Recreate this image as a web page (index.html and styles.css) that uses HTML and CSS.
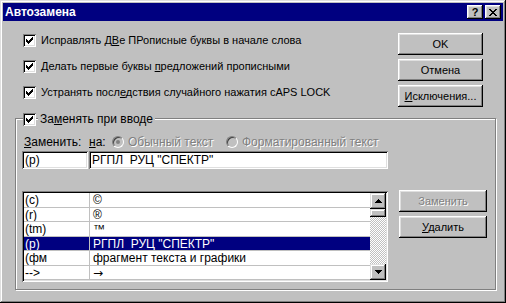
FILE: index.html
```html
<!DOCTYPE html>
<html>
  <head>
    <meta charset="utf-8" />
    <link rel="stylesheet" href="styles.css">
  </head>
  <body>
    <div class="window">
      <div class="titlebar">
        <span class="title">Автозамена</span>
        <div class="title-buttons">
          <span class="tbtn">?</span>
          <span class="tbtn">
            <svg width="8" height="7" viewBox="0 0 8 7" shape-rendering="crispEdges">
              <path d="M0 0h2v1h1v1h2v-1h1v-1h2v1h-1v1h-1v1h-1v1h1v1h1v1h1v1h-2v-1h-1v-1h-2v1h-1v1h-2v-1h1v-1h1v-1h1v-1h-1v-1h-1v-1h-1z" fill="#000"/>
            </svg>
          </span>
        </div>
      </div>

      <div class="top">
        <div class="options">
          <div class="check">
            <span class="box checked"></span>
            <span>Исправлять Д<u>В</u>е ПРописные буквы в начале слова</span>
          </div>
          <div class="check">
            <span class="box checked"></span>
            <span>Делать первые буквы <u>п</u>редложений прописными</span>
          </div>
          <div class="check">
            <span class="box checked"></span>
            <span>Устранять посл<u>е</u>дствия случайного нажатия cAPS LOCK</span>
          </div>
        </div>
        <div class="buttons">
          <button class="btn">OK</button>
          <button class="btn">Отмена</button>
          <button class="btn"><u>И</u>сключения...</button>
        </div>
      </div>

      <div class="group">
        <div class="legend">
          <span class="box checked"></span>
          <span class="legend-text">За<u>м</u>енять при вводе</span>
        </div>

        <div class="labels">
          <span class="lbl-from"><u>З</u>аменить:</span>
          <span class="lbl-to"><u>н</u>а:</span>
          <span class="radio-item first">
            <span class="radio on"></span>
            <span class="disabled">Обычный текст</span>
          </span>
          <span class="radio-item">
            <span class="radio"></span>
            <span class="disabled">Форматированный текст</span>
          </span>
        </div>

        <div class="fields">
          <div class="field short">(p)</div>
          <div class="field long">РГПЛ&nbsp; РУЦ "СПЕКТР"</div>
        </div>

        <div class="lower">
          <div class="list">
            <div class="rows">
              <div class="row"><span class="cell key">(c)</span><span class="cell">©</span></div>
              <div class="row"><span class="cell key">(r)</span><span class="cell">®</span></div>
              <div class="row"><span class="cell key">(tm)</span><span class="cell">™</span></div>
              <div class="row selected"><span class="cell key">(p)</span><span class="cell">РГПЛ&nbsp; РУЦ "СПЕКТР"</span></div>
              <div class="row"><span class="cell key">(фм</span><span class="cell">фрагмент текста и графики</span></div>
              <div class="row"><span class="cell key">--&gt;</span><span class="cell arrow">→</span></div>
            </div>
            <div class="scrollbar">
              <span class="sb-btn">
                <svg width="7" height="4" viewBox="0 0 7 4" shape-rendering="crispEdges"><path d="M3 0h1v1h1v1h1v1h1v1H0V3h1V2h1V1h1z" fill="#000"/></svg>
              </span>
              <span class="sb-thumb"></span>
              <span class="sb-track"></span>
              <span class="sb-btn">
                <svg width="7" height="4" viewBox="0 0 7 4" shape-rendering="crispEdges"><path d="M0 0h7v1H6v1H5v1H4v1H3V3H2V2H1V1H0z" fill="#000"/></svg>
              </span>
            </div>
          </div>
          <div class="side-buttons">
            <button class="btn wide"><span class="disabled">Заменить</span></button>
            <button class="btn wide"><u>У</u>далить</button>
          </div>
        </div>
      </div>
    </div>
  </body>
</html>
```

FILE: styles.css
```css
body {
  margin: 0;
  background: #c0c0c0;
  font-family: "Liberation Sans", Arial, sans-serif;
  font-size: 12px;
  color: #000;
}
u {
  text-underline-offset: 1px;
}
.window {
  width: 506px;
  height: 303px;
  box-sizing: border-box;
  padding: 3px;
  background: #c0c0c0;
  box-shadow: inset -1px -1px #000, inset 1px 1px #dfdfdf,
    inset -2px -2px #808080, inset 2px 2px #fff;
  display: flex;
  flex-direction: column;
}
.titlebar {
  height: 18px;
  background: #000080;
  color: #fff;
  display: flex;
  align-items: center;
  justify-content: space-between;
  padding: 0 2px;
}
.title {
  font-weight: bold;
  font-size: 12px;
}
.title-buttons {
  display: flex;
  gap: 2px;
}
.tbtn {
  width: 16px;
  height: 14px;
  box-sizing: border-box;
  background: #c0c0c0;
  color: #000;
  display: flex;
  align-items: center;
  justify-content: center;
  font-weight: bold;
  font-size: 11px;
  box-shadow: inset -1px -1px #000, inset 1px 1px #fff,
    inset -2px -2px #808080, inset 2px 2px #dfdfdf;
}

.top {
  display: flex;
  padding: 12px 20px 0 20px;
}
.options {
  flex: 1;
  display: flex;
  flex-direction: column;
  gap: 12px;
  font-size: 11px;
}
.check {
  display: flex;
  align-items: center;
  gap: 5px;
  height: 14px;
}
.box {
  width: 13px;
  height: 13px;
  flex: none;
  box-sizing: border-box;
  background: #fff;
  box-shadow: inset 1px 1px #808080, inset -1px -1px #fff,
    inset 2px 2px #000, inset -2px -2px #dfdfdf;
}
.box.checked {
  background: #fff
    url("data:image/svg+xml,%3Csvg xmlns='http://www.w3.org/2000/svg' width='13' height='13' shape-rendering='crispEdges'%3E%3Cpath d='M3 5h1v3H3zM4 6h1v3H4zM5 7h1v3H5zM6 6h1v3H6zM7 5h1v3H7zM8 4h1v3H8zM9 3h1v3H9z' fill='%23000'/%3E%3C/svg%3E")
    no-repeat;
}
.buttons {
  width: 85px;
  display: flex;
  flex-direction: column;
  gap: 4px;
}
.btn {
  height: 22px;
  padding: 0;
  border: 0;
  background: #c0c0c0;
  font: inherit;
  font-size: 11px;
  color: #000;
  box-shadow: inset -1px -1px #000, inset 1px 1px #fff,
    inset -2px -2px #808080, inset 2px 2px #dfdfdf;
}
.disabled {
  color: #808080;
  text-shadow: 1px 1px 0 #fff;
}

.group {
  margin: 11px 7px 0 12px;
  border: 1px solid #808080;
  box-shadow: inset 1px 1px #fff, 1px 1px #fff;
  padding: 0 7px 7px 6px;
}
.legend {
  display: flex;
  align-items: center;
  height: 16px;
  margin: -8px 0 0 1px;
}
.legend-text {
  margin-left: 2px;
  padding: 0 2px;
  background: #c0c0c0;
}
.labels {
  display: flex;
  align-items: center;
  height: 14px;
  margin-top: 8px;
}
.lbl-from {
  width: 65px;
  padding-left: 2px;
}
.lbl-to {
  width: 23px;
}
.radio-item {
  display: flex;
  align-items: center;
  gap: 4px;
}
.radio-item.first {
  width: 114px;
}
.radio {
  width: 12px;
  height: 12px;
  box-sizing: border-box;
  border-radius: 50%;
  background: #c0c0c0;
  border: 1px solid;
  border-color: #808080 #fff #fff #808080;
  box-shadow: inset 1px 1px #404040;
  position: relative;
}
.radio.on::after {
  content: "";
  position: absolute;
  left: 3px;
  top: 3px;
  width: 4px;
  height: 4px;
  border-radius: 50%;
  background: #808080;
}
.fields {
  display: flex;
  gap: 1px;
  margin-top: 2px;
}
.field {
  height: 18px;
  box-sizing: border-box;
  background: #fff;
  padding: 2px 4px 0 3px;
  line-height: 14px;
  box-shadow: inset 1px 1px #808080, inset -1px -1px #fff,
    inset 2px 2px #000, inset -2px -2px #dfdfdf;
}
.field.short {
  width: 66px;
}
.field.long {
  width: 299px;
}

.lower {
  display: flex;
  margin-top: 22px;
}
.list {
  width: 366px;
  height: 91px;
  box-sizing: border-box;
  padding: 2px;
  background: #fff;
  display: flex;
  box-shadow: inset 1px 1px #808080, inset -1px -1px #fff,
    inset 2px 2px #000, inset -2px -2px #dfdfdf;
}
.rows {
  flex: 1;
  overflow: hidden;
}
.row {
  display: grid;
  grid-template-columns: 66px 1fr;
  height: 14.5px;
  box-sizing: border-box;
  border-bottom: 1px solid #c0c0c0;
  line-height: 14px;
}
.cell {
  padding-left: 3px;
  white-space: nowrap;
  overflow: hidden;
}
.cell.key {
  padding-left: 1px;
  border-right: 1px solid #c0c0c0;
}
.cell.arrow {
  font-family: "DejaVu Sans", sans-serif;
  font-size: 12px;
}
.row.selected {
  background: #000080;
  color: #fff;
}
.scrollbar {
  width: 16px;
  display: flex;
  flex-direction: column;
}
.sb-btn,
.sb-thumb {
  height: 16px;
  background: #c0c0c0;
  display: flex;
  align-items: center;
  justify-content: center;
  box-shadow: inset -1px -1px #000, inset 1px 1px #dfdfdf,
    inset -2px -2px #808080, inset 2px 2px #fff;
}
.sb-thumb {
  height: 8px;
}
.sb-track {
  flex: 1;
  background: repeating-conic-gradient(#fff 0 25%, #c0c0c0 0 50%) 0 0 / 2px 2px;
}
.side-buttons {
  width: 88px;
  margin: -1px 0 0 11px;
  display: flex;
  flex-direction: column;
  gap: 4px;
}
```
